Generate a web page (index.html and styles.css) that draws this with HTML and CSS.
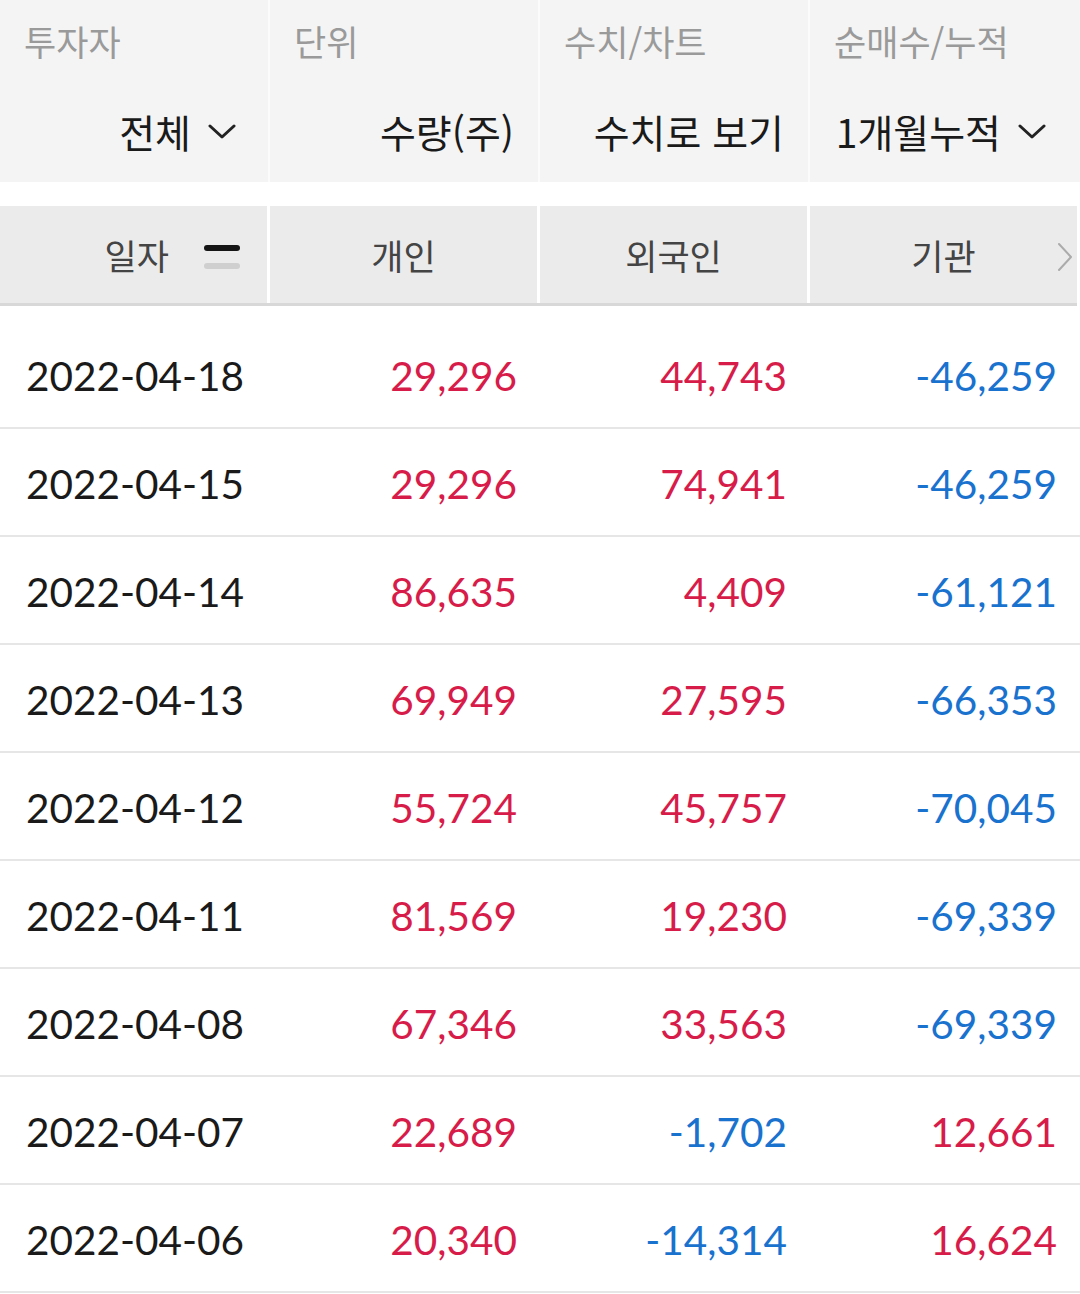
FILE: index.html
```html
<!DOCTYPE html>
<html lang="ko">
<head>
<meta charset="utf-8">
<link rel="stylesheet" href="styles.css">
</head>
<body>
<div class="filters">
  <div class="filter">
    <div class="f-label">투자자</div>
    <div class="f-value">전체<svg class="chev" viewBox="0 0 28 16"><polyline points="2,2 14,13 26,2"/></svg></div>
  </div>
  <div class="filter">
    <div class="f-label">단위</div>
    <div class="f-value">수량(주)</div>
  </div>
  <div class="filter">
    <div class="f-label">수치/차트</div>
    <div class="f-value">수치로 보기</div>
  </div>
  <div class="filter">
    <div class="f-label">순매수/누적</div>
    <div class="f-value">1개월누적<svg class="chev" viewBox="0 0 28 16"><polyline points="2,2 14,13 26,2"/></svg></div>
  </div>
</div>

<div class="thead">
  <div class="th th-date"><span>일자</span><span class="sort"><i class="bar on"></i><i class="bar off"></i></span></div>
  <div class="th">개인</div>
  <div class="th">외국인</div>
  <div class="th th-last">기관<svg class="more" viewBox="0 0 18 30"><polyline points="3,2 15,15 3,28"/></svg></div>
</div>

<div class="tbody">
  <div class="row"><div class="date">2022-04-18</div><div class="num up">29,296</div><div class="num up">44,743</div><div class="num down">-46,259</div></div>
  <div class="row"><div class="date">2022-04-15</div><div class="num up">29,296</div><div class="num up">74,941</div><div class="num down">-46,259</div></div>
  <div class="row"><div class="date">2022-04-14</div><div class="num up">86,635</div><div class="num up">4,409</div><div class="num down">-61,121</div></div>
  <div class="row"><div class="date">2022-04-13</div><div class="num up">69,949</div><div class="num up">27,595</div><div class="num down">-66,353</div></div>
  <div class="row"><div class="date">2022-04-12</div><div class="num up">55,724</div><div class="num up">45,757</div><div class="num down">-70,045</div></div>
  <div class="row"><div class="date">2022-04-11</div><div class="num up">81,569</div><div class="num up">19,230</div><div class="num down">-69,339</div></div>
  <div class="row"><div class="date">2022-04-08</div><div class="num up">67,346</div><div class="num up">33,563</div><div class="num down">-69,339</div></div>
  <div class="row"><div class="date">2022-04-07</div><div class="num up">22,689</div><div class="num down">-1,702</div><div class="num up">12,661</div></div>
  <div class="row"><div class="date">2022-04-06</div><div class="num up">20,340</div><div class="num down">-14,314</div><div class="num up">16,624</div></div>
</div>
</body>
</html>
```

FILE: styles.css
```css
* { box-sizing: border-box; }
html, body {
  margin: 0;
  padding: 0;
  background: #ffffff;
  width: 1080px;
  overflow: hidden;
}
body {
  font-family: "Noto Sans CJK KR", "Noto Sans", sans-serif;
  color: #1a1a1a;
}

/* filter bar */
.filters {
  display: grid;
  grid-template-columns: 268px 268px 268px 270px;
  column-gap: 2px;
  background: #fbfbfb;
  height: 182px;
}
.filter {
  background: #f4f4f4;
  padding: 16px 24px 0 24px;
  display: flex;
  flex-direction: column;
}
.f-label {
  font-size: 35px;
  line-height: 50px;
  color: #9a9a9a;
}
.f-value {
  margin-top: 37px;
  font-size: 39px;
  line-height: 56px;
  color: #1a1a1a;
  display: flex;
  align-items: center;
  justify-content: flex-end;
}
.filter:first-child .f-value { padding-right: 8px; }
.filter:last-child .f-value { padding-right: 10px; }
.chev {
  width: 28px;
  height: 16px;
  margin-left: 17px;
  margin-top: 2px;
  fill: none;
  stroke: #222;
  stroke-width: 3;
  stroke-linecap: round;
  stroke-linejoin: round;
}

/* table header */
.thead {
  margin-top: 24px;
  width: 1077px;
  display: grid;
  grid-template-columns: repeat(4, 267px);
  column-gap: 3px;
  background: #ffffff;
  border-bottom: 3px solid #d8d8d8;
}
.th {
  position: relative;
  height: 97px;
  background: #ebebeb;
  display: flex;
  align-items: center;
  justify-content: center;
  font-size: 35px;
  color: #444444;
}
.th-date {
  justify-content: flex-end;
  padding-right: 27px;
  gap: 35px;
}
.sort {
  display: flex;
  flex-direction: column;
  gap: 12px;
  margin-top: 4px;
}
.bar {
  display: block;
  width: 36px;
  height: 6px;
  border-radius: 3px;
}
.bar.on { background: #151515; }
.bar.off { background: #cfcfcf; }
.more {
  position: absolute;
  right: 3px;
  top: 36px;
  width: 18px;
  height: 30px;
  fill: none;
  stroke: #ababab;
  stroke-width: 2;
  stroke-linecap: round;
  stroke-linejoin: round;
}

/* rows */
.tbody {
  padding-top: 15px;
}
.row {
  display: grid;
  grid-template-columns: repeat(4, 270px);
  height: 108px;
  border-bottom: 2px solid #e6e6e6;
  align-items: center;
  font-family: Lato, "Liberation Sans", sans-serif;
  font-size: 40.5px;
  padding-top: 2px;
}
.date {
  padding-left: 26px;
  color: #1a1a1a;
}
.num {
  text-align: right;
  padding-right: 23px;
}
.up { color: #d81c4a; }
.down { color: #1a72cf; }
```
